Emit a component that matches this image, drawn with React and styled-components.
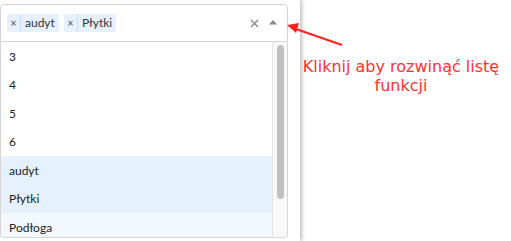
import React from "react";
import styled, { createGlobalStyle } from "styled-components";

const Global = createGlobalStyle`
    html, body { margin: 0; padding: 0; background: #fff; }
    body { font-family: Lato, "Liberation Sans", sans-serif; }
`;

const chips = ["audyt", "Płytki"];
const options = [
    { label: "3" },
    { label: "4" },
    { label: "5" },
    { label: "6" },
    { label: "audyt", selected: true },
    { label: "Płytki", selected: true },
    { label: "Podłoga", focused: true },
];

function App() {
    return (
        <Page>
            <Global />
            <Panel>
                <Select>
                    <Control>
                        <Values>
                            {chips.map(c => (
                                <Chip key={c}>
                                    <ChipRemove>×</ChipRemove>
                                    <ChipLabel>{c}</ChipLabel>
                                </Chip>
                            ))}
                        </Values>
                        <Clear>
                            <svg width="9" height="9" viewBox="0 0 9 9">
                                <path d="M1 1 L8 8 M8 1 L1 8" stroke="#888" strokeWidth="1.4" />
                            </svg>
                        </Clear>
                        <Caret>
                            <svg width="10" height="6" viewBox="0 0 10 6">
                                <path d="M1 5.5 L5 1 L9 5.5 Z" fill="#888" />
                            </svg>
                        </Caret>
                    </Control>
                    <Menu>
                        <List>
                            {options.map(o => (
                                <Option key={o.label} selected={o.selected} focused={o.focused}>{o.label}</Option>
                            ))}
                        </List>
                        <Track>
                            <Thumb />
                        </Track>
                    </Menu>
                </Select>
            </Panel>
            <Hint>
                <Pointer width="70" height="40" viewBox="0 0 70 40">
                    <line x1="57" y1="32" x2="8" y2="15" stroke="#f22" strokeWidth="2" />
                    <path d="M2 12 L14 10 L11 20 Z" fill="#f22" />
                </Pointer>
                <HintText>Kliknij aby rozwinąć listę<br />funkcji</HintText>
            </Hint>
        </Page>
    );
}
export default App;

const Page = styled.div`
    display: flex;
    width: 511px;
    height: 241px;
    overflow: hidden;
    position: relative;
`;

const Panel = styled.div`
    width: 300px;
    flex-shrink: 0;
    padding-top: 4px;
    box-sizing: border-box;
    box-shadow: 2px 0 4px rgba(0, 0, 0, 0.25);
    background: #fff;
    z-index: 1;
`;

const Select = styled.div`
    width: 288px;
    font-size: 12px;
    color: #333;
`;

const Control = styled.div`
    display: flex;
    align-items: center;
    height: 36px;
    border: 1px solid #d4d4d4;
    border-radius: 4px 4px 0 0;
    padding-left: 6px;
    padding-right: 6px;
    background: #fff;
`;

const Values = styled.div`
    display: flex;
    gap: 5px;
    flex: 1;
`;

const Chip = styled.div`
    display: flex;
    align-items: stretch;
    height: 18px;
    background: #e6f1fd;
    border-radius: 2px;
    line-height: 18px;
`;

const ChipRemove = styled.span`
    width: 13px;
    text-align: center;
    border-right: 1px solid #c6ddf3;
    color: #555;
    font-size: 11px;
`;

const ChipLabel = styled.span`
    padding: 0 4px 0 4px;
    color: #333;
`;

const Clear = styled.div`
    display: flex;
    width: 18px;
    justify-content: center;
    margin-right: 2px;
`;

const Caret = styled.div`
    display: flex;
    width: 16px;
    justify-content: center;
    margin-top: -2px;
`;

const Menu = styled.div`
    display: flex;
    height: 195px;
    border: 1px solid #d4d4d4;
    border-top: none;
    border-radius: 0 0 4px 4px;
    overflow: hidden;
`;

const List = styled.div`
    flex: 1;
    overflow: hidden;
`;

const Option = styled.div`
    height: 28.5px;
    display: flex;
    align-items: center;
    padding-left: 8px;
    color: #222;
    background: ${p => (p.selected ? "#e5f1fd" : p.focused ? "#f3f8fe" : "#fff")};
`;

const Track = styled.div`
    width: 14px;
    border-left: 1px solid #e6e6e6;
    background: #f8f8f8;
    display: flex;
    justify-content: center;
`;

const Thumb = styled.div`
    width: 7px;
    height: 154px;
    margin-top: 3px;
    border-radius: 4px;
    background: #c1c1c1;
`;

const Hint = styled.div`
    flex: 1;
    padding-top: 57px;
    position: relative;
`;

const Pointer = styled.svg`
    position: absolute;
    left: -15px;
    top: 13px;
    z-index: 2;
`;

const HintText = styled.div`
    font-family: "DejaVu Sans", Verdana, sans-serif;
    font-size: 16px;
    line-height: 19px;
    color: #ff3030;
    text-align: center;
    padding-right: 9px;
`;
